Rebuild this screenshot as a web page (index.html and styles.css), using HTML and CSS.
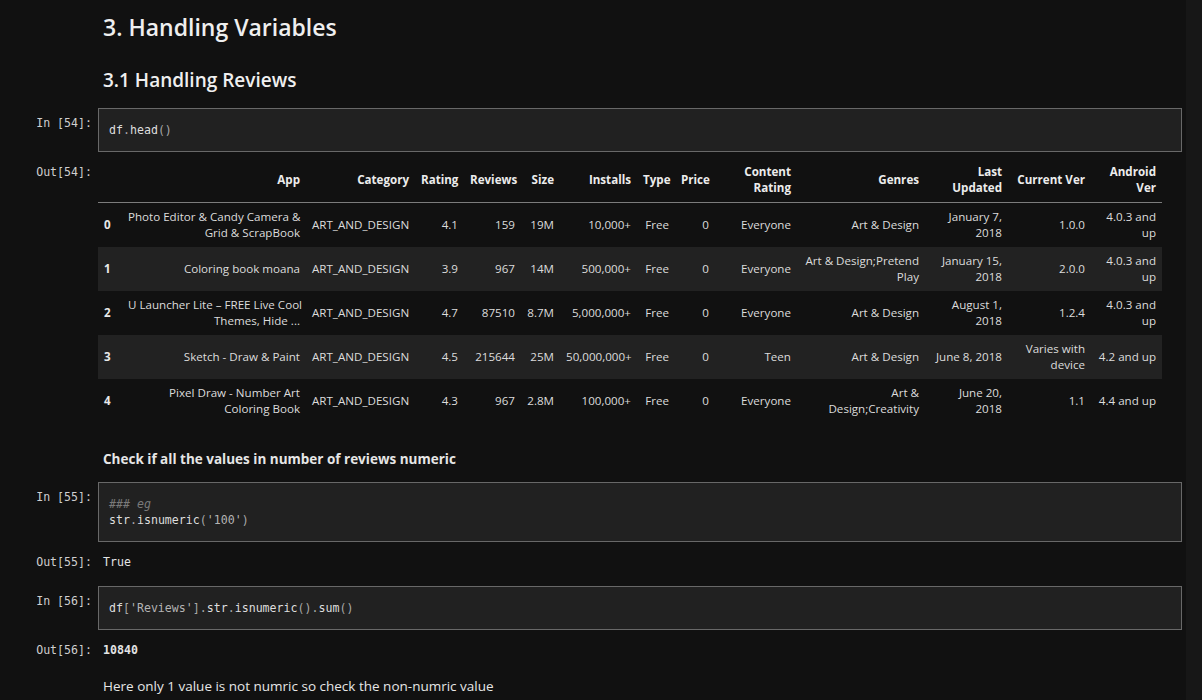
FILE: index.html
```html
<!DOCTYPE html>
<html lang="en">
<head>
<meta charset="utf-8">
<title>Notebook</title>
<link rel="stylesheet" href="styles.css">
</head>
<body>
<div class="page">
  <main class="notebook">
    <section class="cell md h2cell">
      <div class="prompt"></div>
      <div class="md-body"><h2>3. Handling Variables</h2></div>
    </section>
    <section class="cell md h3cell">
      <div class="prompt"></div>
      <div class="md-body"><h3>3.1 Handling Reviews</h3></div>
    </section>

    <section class="cell input first-in">
      <div class="prompt">In [54]:</div>
      <div class="code">df<span class="p">.</span>head<span class="p">()</span></div>
    </section>
    <section class="cell output">
      <div class="prompt">Out[54]:</div>
      <div class="out-body">
        <table class="df">
          <colgroup>
            <col style="width:24px"><col style="width:184px"><col style="width:109px"><col style="width:49px"><col style="width:57px"><col style="width:39px"><col style="width:77px"><col style="width:38px"><col style="width:40px"><col style="width:82px"><col style="width:128px"><col style="width:83px"><col style="width:83px"><col style="width:71px">
          </colgroup>
          <thead>
            <tr><th></th><th>App</th><th>Category</th><th>Rating</th><th>Reviews</th><th>Size</th><th>Installs</th><th>Type</th><th>Price</th><th>Content<br>Rating</th><th>Genres</th><th>Last<br>Updated</th><th>Current Ver</th><th>Android<br>Ver</th></tr>
          </thead>
          <tbody>
            <tr><th>0</th><td>Photo Editor &amp; Candy Camera &amp;<br>Grid &amp; ScrapBook</td><td>ART_AND_DESIGN</td><td>4.1</td><td>159</td><td>19M</td><td>10,000+</td><td>Free</td><td>0</td><td>Everyone</td><td>Art &amp; Design</td><td>January 7,<br>2018</td><td>1.0.0</td><td>4.0.3 and<br>up</td></tr>
            <tr><th>1</th><td>Coloring book moana</td><td>ART_AND_DESIGN</td><td>3.9</td><td>967</td><td>14M</td><td>500,000+</td><td>Free</td><td>0</td><td>Everyone</td><td>Art &amp; Design;Pretend<br>Play</td><td>January 15,<br>2018</td><td>2.0.0</td><td>4.0.3 and<br>up</td></tr>
            <tr><th>2</th><td>U Launcher Lite – FREE Live Cool<br>Themes, Hide ...</td><td>ART_AND_DESIGN</td><td>4.7</td><td>87510</td><td>8.7M</td><td>5,000,000+</td><td>Free</td><td>0</td><td>Everyone</td><td>Art &amp; Design</td><td>August 1,<br>2018</td><td>1.2.4</td><td>4.0.3 and<br>up</td></tr>
            <tr><th>3</th><td>Sketch - Draw &amp; Paint</td><td>ART_AND_DESIGN</td><td>4.5</td><td>215644</td><td>25M</td><td>50,000,000+</td><td>Free</td><td>0</td><td>Teen</td><td>Art &amp; Design</td><td>June 8, 2018</td><td>Varies with<br>device</td><td>4.2 and up</td></tr>
            <tr><th>4</th><td>Pixel Draw - Number Art<br>Coloring Book</td><td>ART_AND_DESIGN</td><td>4.3</td><td>967</td><td>2.8M</td><td>100,000+</td><td>Free</td><td>0</td><td>Everyone</td><td>Art &amp;<br>Design;Creativity</td><td>June 20,<br>2018</td><td>1.1</td><td>4.4 and up</td></tr>
          </tbody>
        </table>
      </div>
    </section>

    <section class="cell md check-cell">
      <div class="prompt"></div>
      <div class="md-body"><p class="strong">Check if all the values in number of reviews numeric</p></div>
    </section>

    <section class="cell input in55">
      <div class="prompt">In [55]:</div>
      <div class="code"><span class="c">### eg</span><br>str<span class="p">.</span>isnumeric<span class="p">(</span><span class="s">'100'</span><span class="p">)</span></div>
    </section>
    <section class="cell output">
      <div class="prompt">Out[55]:</div>
      <div class="out-text">True</div>
    </section>

    <section class="cell input in56">
      <div class="prompt">In [56]:</div>
      <div class="code">df<span class="p">[</span><span class="s">'Reviews'</span><span class="p">].</span>str<span class="p">.</span>isnumeric<span class="p">().</span>sum<span class="p">()</span></div>
    </section>
    <section class="cell output">
      <div class="prompt">Out[56]:</div>
      <div class="out-text bold">10840</div>
    </section>

    <section class="cell md last-md">
      <div class="prompt"></div>
      <div class="md-body"><p>Here only 1 value is not numric so check the non-numric value</p></div>
    </section>
  </main>
  <div class="scroll-track"></div>
</div>
</body>
</html>
```
FILE: styles.css
```css
* { box-sizing: border-box; }

html, body {
  margin: 0;
  padding: 0;
  background: #111111;
  height: 100%;
  overflow: hidden;
}

.page {
  display: flex;
  height: 700px;
  font-family: "Open Sans", "Noto Sans", sans-serif;
  color: #dcdcdc;
}

.notebook {
  flex: 1;
  padding-right: 4px;
}

.scroll-track {
  width: 16px;
  flex: none;
  background: #171717;
}

.cell {
  display: flex;
  align-items: flex-start;
}

.prompt {
  width: 98px;
  flex: none;
  padding-right: 6px;
  text-align: right;
  font-family: "DejaVu Sans Mono", "Liberation Mono", monospace;
  font-size: 11.6px;
  line-height: 16px;
  color: #cfcfcf;
  white-space: pre;
}

.md-body {
  flex: 1;
  padding-left: 5px;
}

h2, h3, p { margin: 0; }

h2 {
  font-size: 23px;
  line-height: 32px;
  font-weight: 600;
  color: #efefef;
}

h3 {
  font-size: 19px;
  line-height: 28px;
  font-weight: 600;
  color: #efefef;
}

p {
  font-size: 13.5px;
  line-height: 20px;
  color: #e6e6e6;
}

p.strong { font-weight: 700; }

.h2cell { margin-top: 11px; }
.h3cell { margin-top: 23px; }
.first-in { margin-top: 14px; }
.check-cell { margin-top: 26px; }
.in55 { margin-top: 13px; }
.in56 { margin-top: 9px; }
.last-md { margin-top: 11px; }

.input .prompt { padding-top: 7px; }

.code {
  flex: 1;
  background: #212121;
  border: 1px solid #686868;
  padding: 13px 10px;
  font-family: "DejaVu Sans Mono", "Liberation Mono", monospace;
  font-size: 11.6px;
  line-height: 16px;
  color: #dedede;
  white-space: pre;
}

.code .p { color: #a9a9a9; }
.code .s { color: #b4b4b4; }
.code .c { color: #7a7a7a; font-style: italic; }

.output { margin-top: 5px; }
.output .prompt { padding-top: 7px; }

.out-body {
  flex: 1;
}

.out-text {
  flex: 1;
  padding: 7px 5px;
  font-family: "DejaVu Sans Mono", "Liberation Mono", monospace;
  font-size: 11.6px;
  line-height: 16px;
  color: #e4e4e4;
}

.out-text.bold { font-weight: 700; }

.df {
  margin-top: 1px;
  border-collapse: collapse;
  table-layout: fixed;
  width: 1064px;
  font-size: 11.6px;
  line-height: 16px;
  color: #dcdcdc;
}

.df th, .df td {
  padding: 6px;
  text-align: right;
  vertical-align: middle;
  white-space: nowrap;
}

.df thead th {
  font-weight: 700;
  color: #ececec;
  border-bottom: 1px solid #7c7c7c;
  height: 44px;
}

.df tbody th {
  font-weight: 700;
  text-align: left;
  color: #e8e8e8;
}

.df tbody tr { height: 44px; }

.df tbody tr:nth-child(even) { background: #222222; }
```
